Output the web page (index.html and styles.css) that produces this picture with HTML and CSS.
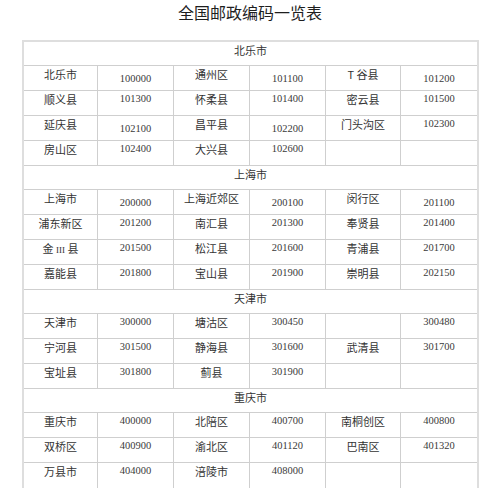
FILE: index.html
```html
<!DOCTYPE html>
<html lang="zh">
<head>
<meta charset="utf-8">
<link rel="stylesheet" href="styles.css">
</head>
<body>
<h1 class="title">全国邮政编码一览表</h1>
<div class="sheet">
  <div class="hd">北乐市</div>
  <div class="row"><div class="nm">北乐市</div><div class="cd lo">100000</div><div class="nm">通州区</div><div class="cd lo">101100</div><div class="nm">T 谷县</div><div class="cd lo">101200</div></div>
  <div class="row"><div class="nm">顺义县</div><div class="cd">101300</div><div class="nm">怀柔县</div><div class="cd">101400</div><div class="nm">密云县</div><div class="cd">101500</div></div>
  <div class="row"><div class="nm">延庆县</div><div class="cd lo">102100</div><div class="nm">昌平县</div><div class="cd lo">102200</div><div class="nm">门头沟区</div><div class="cd">102300</div></div>
  <div class="row"><div class="nm">房山区</div><div class="cd">102400</div><div class="nm">大兴县</div><div class="cd">102600</div><div class="nm"></div><div class="cd"></div></div>

  <div class="hd">上海市</div>
  <div class="row"><div class="nm">上海市</div><div class="cd lo">200000</div><div class="nm">上海近郊区</div><div class="cd lo">200100</div><div class="nm">闵行区</div><div class="cd lo">201100</div></div>
  <div class="row"><div class="nm">浦东新区</div><div class="cd">201200</div><div class="nm">南汇县</div><div class="cd">201300</div><div class="nm">奉贤县</div><div class="cd">201400</div></div>
  <div class="row"><div class="nm">金 <span class="roman">III</span> 县</div><div class="cd">201500</div><div class="nm">松江县</div><div class="cd">201600</div><div class="nm">青浦县</div><div class="cd">201700</div></div>
  <div class="row"><div class="nm">嘉能县</div><div class="cd">201800</div><div class="nm">宝山县</div><div class="cd">201900</div><div class="nm">崇明县</div><div class="cd">202150</div></div>

  <div class="hd">天津市</div>
  <div class="row"><div class="nm">天津市</div><div class="cd">300000</div><div class="nm">塘沽区</div><div class="cd">300450</div><div class="nm"></div><div class="cd">300480</div></div>
  <div class="row"><div class="nm">宁河县</div><div class="cd">301500</div><div class="nm">静海县</div><div class="cd">301600</div><div class="nm">武清县</div><div class="cd">301700</div></div>
  <div class="row"><div class="nm">宝址县</div><div class="cd">301800</div><div class="nm">蓟县</div><div class="cd">301900</div><div class="nm"></div><div class="cd"></div></div>

  <div class="hd">重庆市</div>
  <div class="row"><div class="nm">重庆市</div><div class="cd">400000</div><div class="nm">北陪区</div><div class="cd">400700</div><div class="nm">南桐创区</div><div class="cd">400800</div></div>
  <div class="row"><div class="nm">双桥区</div><div class="cd">400900</div><div class="nm">渝北区</div><div class="cd">401120</div><div class="nm">巴南区</div><div class="cd">401320</div></div>
  <div class="row last"><div class="nm">万县市</div><div class="cd">404000</div><div class="nm">涪陵市</div><div class="cd">408000</div><div class="nm"></div><div class="cd"></div></div>
</div>
</body>
</html>
```

FILE: styles.css
```css
html, body {
  margin: 0;
  padding: 0;
  background: #ffffff;
}

.title {
  margin: 0;
  padding: 1px 0 17px;
  font-family: "Noto Sans CJK SC", "Noto Sans", sans-serif;
  font-size: 16px;
  line-height: 22px;
  font-weight: normal;
  color: #1e1e1e;
  text-align: center;
}

.sheet {
  box-sizing: border-box;
  width: 457px;
  margin-left: 22px;
  display: grid;
  grid-template-columns: 74px 76px 76px 76px 75px 76px;
  border: 2px solid #dedede;
  border-bottom: none;
  font-family: "Noto Sans CJK SC", "Noto Sans", sans-serif;
  font-size: 11px;
  color: #333333;
}

.row {
  display: contents;
}

.hd,
.nm,
.cd {
  box-sizing: border-box;
  border-bottom: 1px solid #cfcfcf;
  text-align: center;
  white-space: nowrap;
  overflow: hidden;
}

.hd {
  grid-column: 1 / -1;
  height: 24px;
  padding-top: 1px;
  line-height: 14px;
}

.nm,
.cd {
  height: 25px;
  padding-top: 1px;
  line-height: 14px;
  border-right: 1px solid #cfcfcf;
}

.row > :last-child {
  border-right: none;
}

.cd {
  font-family: "Liberation Serif", "Times New Roman", serif;
  font-size: 10.5px;
  color: #3a3a3a;
}

.cd.lo {
  padding-top: 6px;
}

.roman {
  font-family: "Liberation Serif", serif;
  font-size: 9px;
}

.row.last > * {
  border-bottom: none;
}
```
